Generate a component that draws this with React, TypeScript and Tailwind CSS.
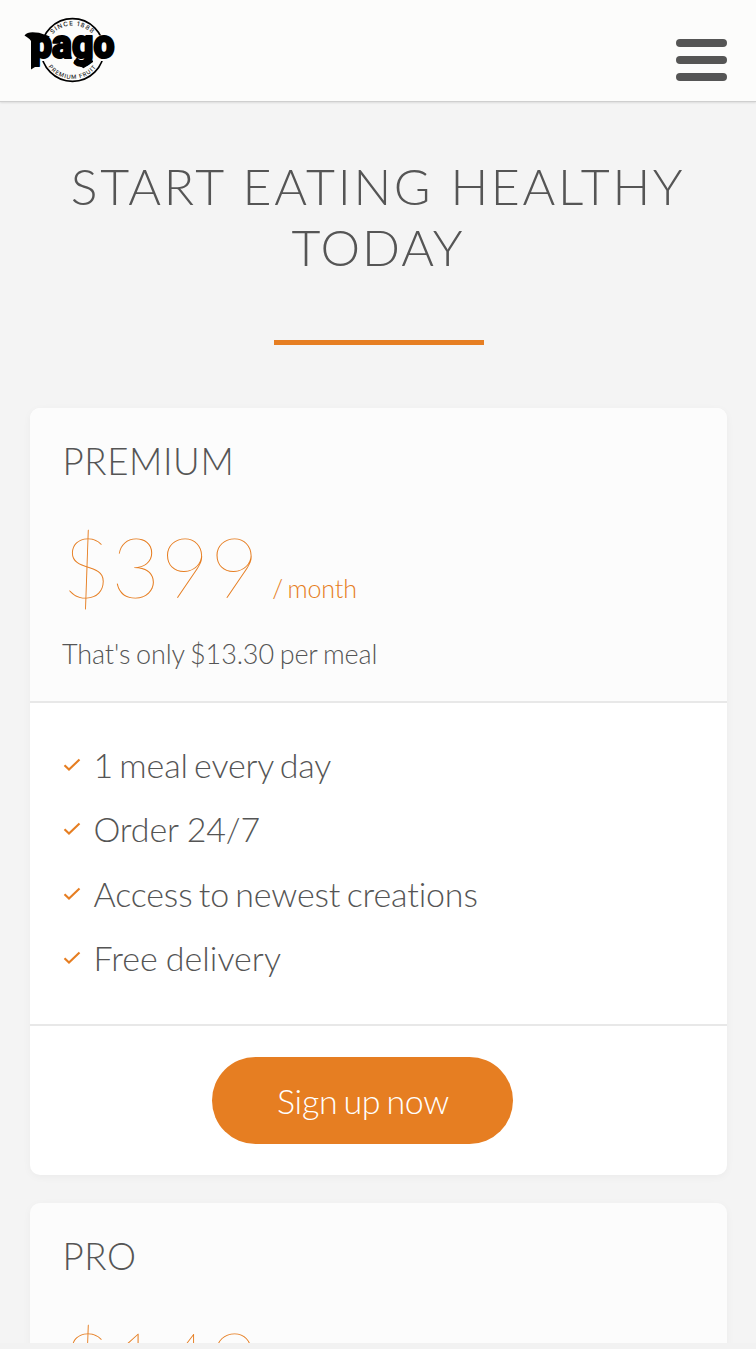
import type { ReactNode } from "react";

function Logo() {
  return (
    <svg className="block h-[70px] w-[100px]" viewBox="20 14 100 70" role="img" aria-label="Pago">
      <defs>
        <path id="arc-top" d="M 46.5 50 A 26 24.500 0 0 1 98.5 50" />
        <path id="arc-bottom" d="M 43 50 A 29.500 29 0 0 0 102 50" />
      </defs>
      <circle cx="72.5" cy="50" r="31.4" fill="#fcfcfb" stroke="#000" strokeWidth="1.7" />
      <path d="M24 35.500H117V61H24Z" fill="#fcfcfb" />
      <text fontFamily="Inter, sans-serif" fontSize="6.2" fontWeight="500" letterSpacing="1" textAnchor="middle" fill="#222">
        <textPath href="#arc-top" startOffset="50%">SINCE 1888</textPath>
      </text>
      <text fontFamily="Inter, sans-serif" fontSize="5.7" fontWeight="500" letterSpacing="0.85" textAnchor="middle" fill="#222">
        <textPath href="#arc-bottom" startOffset="50%">PREMIUM FRUIT</textPath>
      </text>
      <path d="M24.5 35.500C27 31.700 32 32 39 32.700L50 36.500L39 41V64.5L31 69.500V41C29.500 38.500 27 37 24.500 35.500Z" fill="#000" />
      <path d="M74 60.500H93V62L83.500 68.300L74 62.500Z" fill="#000" />
      <text
        x="31"
        y="58.3"
        fontFamily="Roboto, sans-serif"
        fontSize="40"
        fontWeight="900"
        textLength="83.5"
        lengthAdjust="spacingAndGlyphs"
        stroke="#000"
        strokeWidth="2"
        strokeLinejoin="round"
      >
        pago
      </text>
    </svg>
  );
}

function Header() {
  return (
    <header className="flex h-[102px] items-start justify-between border-b border-[#cfcfcf] bg-[#fcfcfb] pt-[14px] pr-[29px] pl-5 shadow-[0_1px_2px_rgba(0,0,0,0.1)]">
      <Logo />
      <button aria-label="Menu" className="mt-[25px] flex w-[51px] flex-col gap-[9px]">
        <span className="h-2 rounded-full bg-[#555]" />
        <span className="h-2 rounded-full bg-[#555]" />
        <span className="h-2 rounded-full bg-[#555]" />
      </button>
    </header>
  );
}

function PlanHead({ name, price, children }: { name: string; price: string; children?: ReactNode }) {
  return (
    <div className="h-[295px] border-b-2 border-[#e8e8e8] bg-[#fcfcfc] px-8 pt-[31px]">
      <h3 className="h-[44px] pl-[0.500px] text-[36.700px] leading-[44px] tracking-[0.6px]">{name}</h3>
      <p className="mt-[29px] h-[108px] leading-[108px] whitespace-nowrap text-[#e67e22]">
        <span className="text-[84.500px] font-thin tracking-[0.300px]">{price}</span>
        <span className="ml-[13px] text-[25px] tracking-[-0.100px] [word-spacing:-2.300px]">/ month</span>
      </p>
      <p className="mt-[14px] text-[27px] leading-[40px] tracking-[-0.120px] [word-spacing:-1.500px]">{children}</p>
    </div>
  );
}

function Check() {
  return (
    <svg className="mr-[12px] h-[14px] w-[18px] shrink-0" viewBox="0 0 18 14" fill="none">
      <path d="M1.500 7.200L6 11.600L16.500 1.500" stroke="#e67e22" strokeWidth="2.100" />
    </svg>
  );
}

const features = [
  { label: "1 meal every day", spacing: "[word-spacing:-2.800px]" },
  { label: "Order 24/7", spacing: "[word-spacing:-0.500px]" },
  { label: "Access to newest creations", spacing: "[word-spacing:-2.800px]" },
  { label: "Free delivery", spacing: "tracking-[0.050px] [word-spacing:-1.500px]" },
];

export default function App() {
  return (
    <div className="h-[1349px] overflow-hidden bg-[#f4f4f4] font-['Lato',sans-serif] font-light text-[#555]">
      <Header />
      <main className="h-[1241px] overflow-hidden">
        <h2 className="mt-[54px] text-center text-[50px] leading-[61px] tracking-[2px] uppercase">
          <span className="tracking-[2.650px] [word-spacing:1px]">Start eating healthy</span>
          <br />
          today
        </h2>
        <div className="mt-[62px] ml-[274px] h-[5px] w-[210px] bg-[#e67e22]" />
        <section className="mt-[63px] mr-[29px] ml-[30px] h-[767px] overflow-hidden rounded-[10px] bg-white shadow-[0_2px_8px_rgba(0,0,0,0.04)]">
          <PlanHead name="PREMIUM" price="$399">
            That's only $13.30 per meal
          </PlanHead>
          <ul className="h-[323px] border-b-2 border-[#e8e8e8] px-[33px] pt-[30px]">
            {features.map(({ label, spacing }) => (
              <li
                key={label}
                className="flex h-[64.300px] items-center text-[34px] [font-variant-ligatures:none] tracking-[-0.150px]"
              >
                <Check />
                <span className={`pb-px pl-[0.500px] ${spacing}`}>{label}</span>
              </li>
            ))}
          </ul>
          <div className="pt-[31px] pl-[182px]">
            <button className="h-[87px] w-[301px] rounded-full bg-[#e67e22] pl-px text-[34px] tracking-[-0.300px] text-white [word-spacing:-2.800px]">
              Sign up now
            </button>
          </div>
        </section>
        <section className="mt-7 mr-[29px] ml-[30px] overflow-hidden rounded-[10px] shadow-[0_2px_8px_rgba(0,0,0,0.04)]">
          <PlanHead name="PRO" price="$149" />
        </section>
      </main>
      <div className="h-[6px] bg-[#f2f2f2]" />
    </div>
  );
}
